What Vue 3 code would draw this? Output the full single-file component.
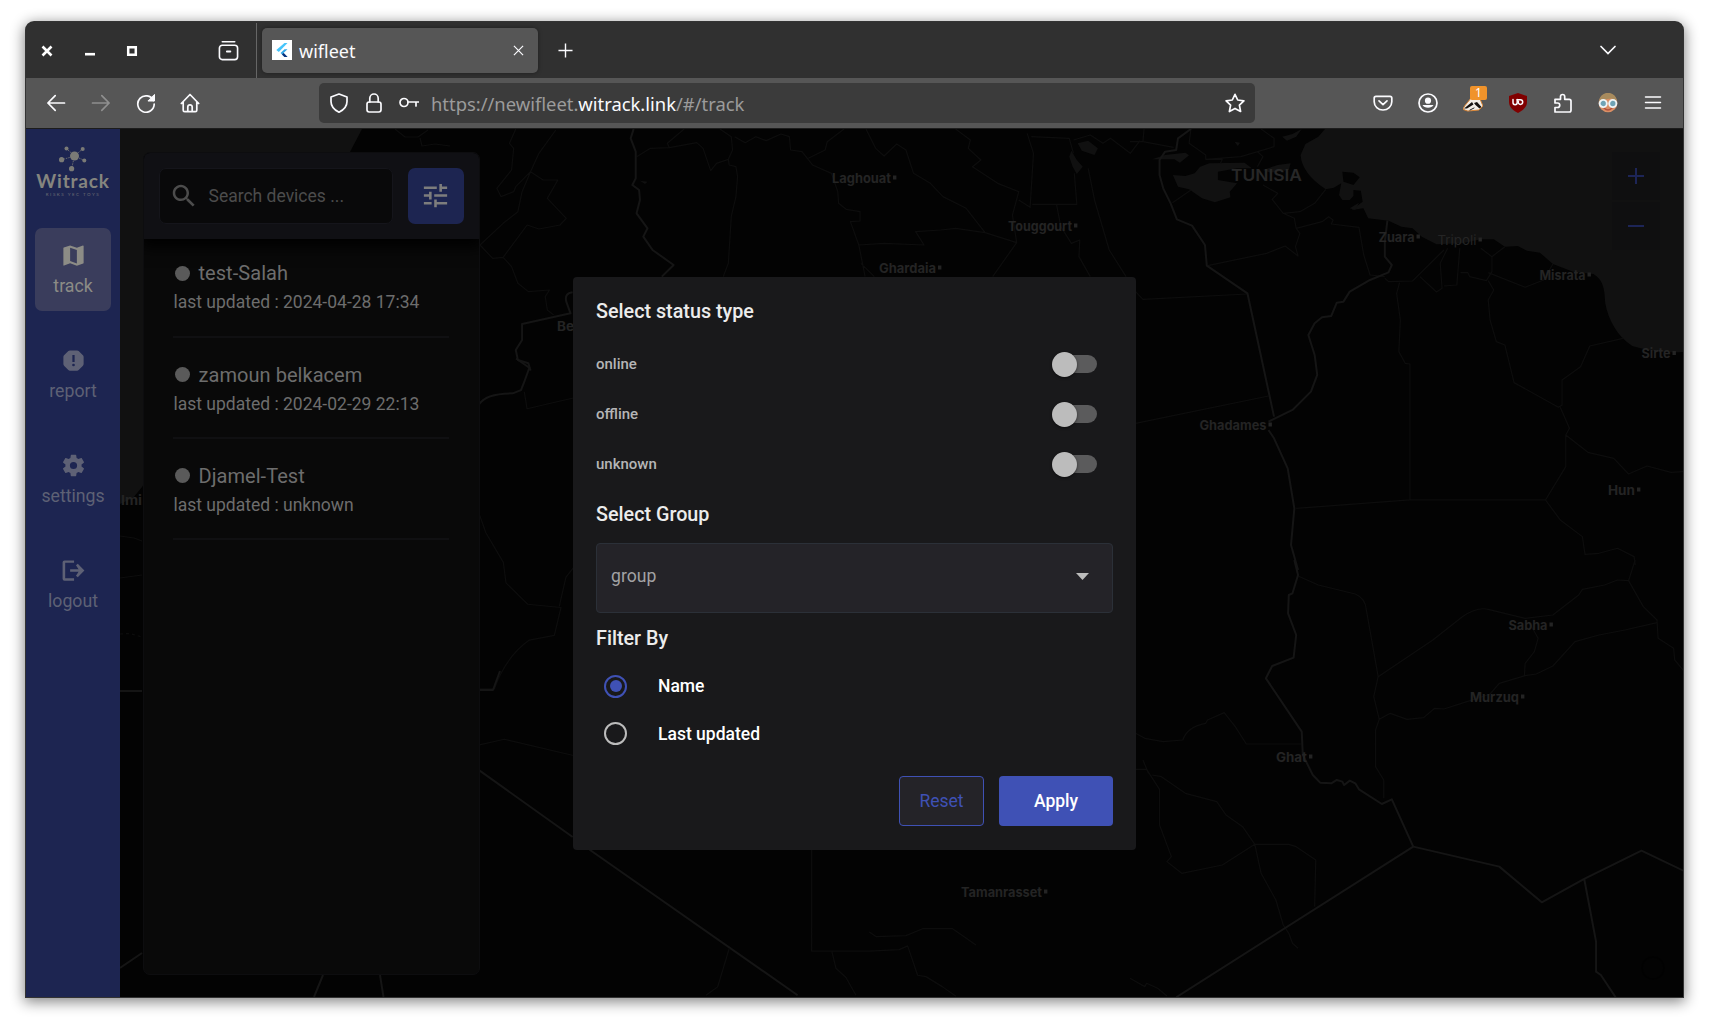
<script setup>
import { ref } from 'vue'

const navItems = [
  { id: 'track', label: 'track', icon: 'M20.5 3l-.16.03L15 5.1 9 3 3.36 4.9c-.21.07-.36.25-.36.48V20.5c0 .28.22.5.5.5l.16-.03L9 18.9l6 2.1 5.64-1.9c.21-.07.36-.25.36-.48V3.5c0-.28-.22-.5-.5-.5zM15 19l-6-2.11V5l6 2.11V19z' },
  { id: 'report', label: 'report', icon: 'M15.2 3H8.8Q8 3 7.4 3.6L3.6 7.4Q3 8 3 8.8v6.4q0 .8.6 1.4l3.8 3.8q.6.6 1.4.6h6.4q.8 0 1.4-.6l3.8-3.8q.6-.6.6-1.4V8.8q0-.8-.6-1.4l-3.8-3.8Q16 3 15.2 3zM11 7h2v6.4h-2zM12 17.2a1.2 1.2 0 1 1 0-2.4 1.2 1.2 0 0 1 0 2.4z' },
  { id: 'settings', label: 'settings', icon: 'M19.14 12.94c.04-.3.06-.61.06-.94 0-.32-.02-.64-.07-.94l2.03-1.58c.18-.14.23-.41.12-.61l-1.92-3.32c-.12-.22-.37-.29-.59-.22l-2.39.96c-.5-.38-1.03-.7-1.62-.94l-.36-2.54c-.04-.24-.24-.41-.48-.41h-3.84c-.24 0-.43.17-.47.41l-.36 2.54c-.59.24-1.13.57-1.62.94l-2.39-.96c-.22-.08-.47 0-.59.22L2.74 8.87c-.12.21-.08.47.12.61l2.03 1.58c-.05.3-.09.63-.09.94s.02.64.07.94l-2.03 1.58c-.18.14-.23.41-.12.61l1.92 3.32c.12.22.37.29.59.22l2.39-.96c.5.38 1.03.7 1.62.94l.36 2.54c.05.24.24.41.48.41h3.84c.24 0 .44-.17.47-.41l.36-2.54c.59-.24 1.13-.56 1.62-.94l2.39.96c.22.08.47 0 .59-.22l1.92-3.32c.12-.22.07-.47-.12-.61l-2.01-1.58zM12 15.2a3.2 3.2 0 1 1 0-6.4 3.2 3.2 0 0 1 0 6.4z' },
  { id: 'logout', label: 'logout', icon: 'M12.5 5.2H4.6v13.6h7.9V21H4Q2.3 21 2.3 19.300V4.700Q2.3 3 4 3h8.500zM9 10.900h7.500l-2.300-3.600 1.600-1.300L21.700 12l-5.900 6-1.600-1.300 2.300-3.600H9z' },
]
const active = ref('track')

const devices = [
  { name: 'test-Salah', updated: '2024-04-28 17:34' },
  { name: 'zamoun belkacem', updated: '2024-02-29 22:13' },
  { name: 'Djamel-Test', updated: 'unknown' },
]

const statuses = ['online', 'offline', 'unknown']
const sortOptions = ['Name', 'Last updated']
const sortBy = ref('Name')

const cities = [
  { name: 'Laghouat', x: 832, y: 182.5, w: 59 },
  { name: 'Touggourt', x: 1008, y: 230.5, w: 64 },
  { name: 'Ghardaia', x: 879, y: 272.5, w: 57 },
  { name: 'Be', x: 557, y: 330.5, w: 17 },
  { name: 'Zuara', x: 1378.5, y: 241.5, w: 36 },
  { name: 'Tripoli', x: 1437.5, y: 244.5, w: 39, light: true },
  { name: 'Misrata', x: 1539.5, y: 279.5, w: 46 },
  { name: 'Sirte', x: 1641.5, y: 358, w: 29 },
  { name: 'Ghadames', x: 1199.5, y: 429.5, w: 67 },
  { name: 'Hun', x: 1608, y: 494.5, w: 27 },
  { name: 'Sabha', x: 1508.5, y: 629.5, w: 39 },
  { name: 'Murzuq', x: 1470, y: 701.5, w: 49 },
  { name: 'Ghat', x: 1276, y: 761.5, w: 31 },
  { name: 'Tamanrasset', x: 961, y: 896.5, w: 81 },
]
</script>

<template>
  <div class="desktop">
    <div class="window">
      <header class="tabbar">
        <div class="controls">
          <svg viewBox="0 0 12 12" class="wc"><path d="M1.500 1.500l9 9M10.500 1.500l-9 9" stroke="#fff" stroke-width="2.600" /></svg>
          <svg viewBox="0 0 12 12" class="wc"><path d="M1 9.200h10" stroke="#fff" stroke-width="2.600" /></svg>
          <svg viewBox="0 0 12 12" class="wc"><path d="M2.200 2.200h7.600v7.600H2.200z" stroke="#fff" stroke-width="2.500" fill="none" /></svg>
        </div>
        <svg class="archive" viewBox="0 0 22 22" fill="none" stroke="#fbfbfe" stroke-width="1.700" stroke-linecap="round"><path d="M4.500 1.800h13" /><rect x="1.500" y="5.500" width="19" height="15" rx="3" /><path d="M9.300 12h3.600" stroke-width="2" /></svg>
        <div class="tab">
          <svg class="favicon" viewBox="0 0 20 20"><rect width="20" height="20" fill="#fff" /><path d="M12.500 3H15.500L6.800 12 4.300 9.900z" fill="#47c5fb" /><path d="M12.500 9.300h3L11.500 13l4 4h-3l-4-4z" fill="#35a8e6" /><path d="M10 14.500l1.700-1.500 3.800 4h-3z" fill="#0b2f7a" /></svg>
          <span class="tab-title">wifleet</span>
          <svg class="tab-close" viewBox="0 0 12 12"><path d="M1 1l10 10M11 1L1 11" stroke="#fbfbfe" stroke-width="1.300" /></svg>
        </div>
        <svg class="newtab" viewBox="0 0 16 16"><path d="M8 .5v15M.5 8h15" stroke="#fbfbfe" stroke-width="1.500" /></svg>
        <svg class="alltabs" viewBox="0 0 18 18"><path d="M2 5.500l7 7 7-7" fill="none" stroke="#fbfbfe" stroke-width="1.700" stroke-linecap="round" /></svg>
      </header>

      <div class="toolbar">
        <div class="nav-btns">
          <svg viewBox="0 0 20 20"><path d="M18.500 10H2M9.200 2.700L1.900 10l7.300 7.300" /></svg>
          <svg viewBox="0 0 20 20" class="dim"><path d="M1.500 10H18M10.800 2.700l7.300 7.300-7.300 7.300" /></svg>
          <svg viewBox="0 0 20 20"><path d="M17.400 7.500A8.200 8.200 0 1 0 18.200 11" /><path d="M18.500 1.800V8h-6.200z" fill="#fbfbfe" stroke-width="1" /></svg>
          <svg viewBox="0 0 20 20"><path d="M1.300 10.500L10 1.500l8.700 9M3.200 9v8.200q0 1.500 1.500 1.500h10.600q1.500 0 1.500-1.500V9M7.800 18.500V14a2.200 2.200 0 0 1 4.400 0v4.500" /></svg>
        </div>
        <div class="urlbar">
          <svg viewBox="0 0 20 20" class="shield"><path d="M10 1L18 4v4.500c0 4.500-3 8.300-8 10.700C5 16.800 2 13 2 8.500V4z" /></svg>
          <svg viewBox="0 0 20 20" class="lock"><rect x="3" y="9" width="14" height="10" rx="2.200" /><path d="M5.800 9V5.200a4.200 4.200 0 0 1 8.400 0V9" /></svg>
          <svg viewBox="0 0 20 20" class="key"><circle cx="5" cy="9.500" r="4" /><path d="M9 9h10.500M17 9v4" /></svg>
          <span class="url">https://newifleet.<b>witrack.link</b>/#/track</span>
          <svg viewBox="0 0 20 20" class="star"><path d="M10 1.300l2.700 5.700 6.200.8-4.500 4.300 1.200 6.400L10 15.400l-5.600 3.100 1.200-6.400L1.100 7.800l6.200-.8z" /></svg>
        </div>
        <div class="ext">
          <svg viewBox="0 0 20 20"><path d="M3 3.300h14q1.800 0 1.800 1.800v3.700a8.800 8.200 0 0 1-17.600 0V5.100Q1.200 3.300 3 3.300zM6 7.800l4 3.800 4-3.800" /></svg>
          <svg viewBox="0 0 20 20"><circle cx="10" cy="10" r="9" /><circle cx="10" cy="7.700" r="3.100" fill="#fbfbfe" stroke="none" /><path d="M4.500 12h11a6 4.500 0 0 1-11 0z" fill="#fbfbfe" stroke="none" /></svg>
          <span class="badger">
            <svg viewBox="0 0 20 20"><path d="M0 16C2 11 6 9 9 3l8 3 3 7-4 4-11 1z" fill="#f1ece6" stroke="#d98535" stroke-width="1" /><path d="M1 15.500L9 9l1.500 2.500-6.500 4zM11 10l3-1 4.500 5-2 1.500-4-3.500z" fill="#16120f" stroke="none" /><path d="M7 17l4-2" stroke="#222" stroke-width="1" /></svg>
            <i class="count">1</i>
          </span>
          <svg viewBox="0 0 20 20"><path d="M10 0l9 3v6c0 5-4 8.500-9 11-5-2.500-9-6-9-11V3z" fill="#800000" stroke="none" /><path d="M5 6.600v3a1.700 1.700 0 0 0 4.200 0V6.600" stroke-width="1.500" /><path d="M9.200 6.800h3.200a2.200 2.200 0 0 1 0 4.600 2.200 2.200 0 0 1-2-3" stroke-width="1.500" /></svg>
          <svg viewBox="0 0 20 20"><path d="M2 19V14.500h2.500a2.200 2.200 0 0 0 0-4.500H2V6.300h5.500V3.600a2.100 2.100 0 0 1 4.200 0v2.700h4.600q1.700 0 1.700 1.700v9.300q0 1.700-1.700 1.700z" /></svg>
          <svg viewBox="0 0 20 20"><circle cx="10" cy="10" r="9.300" fill="#d98f65" stroke="none" /><path d="M.8 9a9.200 9.200 0 0 1 18.400 0L14 5.500 9 6z" fill="#a88b5d" stroke="none" /><path d="M6 15q4 4 8 0" stroke="#b5513d" stroke-width="1.400" /><circle cx="5.200" cy="10.500" r="3.600" fill="#6fa3b5" stroke="#eef4f6" stroke-width="1.900" /><circle cx="14.800" cy="10.500" r="3.600" fill="#6fa3b5" stroke="#eef4f6" stroke-width="1.900" /></svg>
          <svg viewBox="0 0 20 20"><path d="M2.500 4h15M2.500 9.500h15M2.500 15h15" stroke-width="1.500" /></svg>
        </div>
      </div>

      <main class="page">
        <aside class="sidebar">
          <div class="brand">
            <svg class="brand-mark" viewBox="0 0 28 26" fill="#7a7a76" stroke="#7a7a76" stroke-width=".8"><path d="M15.500 10L7.500 2.500M15.500 10L23.500 3M15.500 10L25.500 14.500M15.500 10L2 14M15.500 10L12.500 23" stroke-dasharray="1.500 1" /><g stroke="none"><circle cx="15.500" cy="10" r="4.500" /><circle cx="7.500" cy="2.500" r="2" /><circle cx="23.700" cy="3" r="2" /><circle cx="25.300" cy="14.400" r="2" /><circle cx="2.600" cy="13.700" r="2.600" /><circle cx="12.600" cy="22.700" r="2.600" /></g></svg>
            <span class="brand-name">Witrack</span>
            <span class="brand-tag">RISKS YEC TOYS</span>
          </div>
          <nav class="menu">
            <a v-for="n in navItems" :key="n.id" class="menu-item" :class="{ on: n.id === active }" @click="active = n.id">
              <svg viewBox="0 0 24 24"><path :d="n.icon" fill-rule="evenodd" /></svg>
              <span>{{ n.label }}</span>
            </a>
          </nav>
        </aside>

        <section class="content">
          <svg class="map" viewBox="120 129 1563 868" fill="none">
            <rect x="120" y="129" width="1563" height="868" fill="#030303" />
            <path d="M120 129H362L350 152 142 487 133 498 120 504z" fill="#111" />
            <!-- north-east coast -->
            <g transform="translate(1130 120) scale(.3693 .3333)">
              <path fill="#111" d="M528 27L510 50 475 72 462 105Q465 160 530 208L552 203 572 190 566 225 575 240 595 240 605 228 605 210 625 212 630 245 600 270 632 265 645 295 700 302 735 320 765 325 790 350 830 373 900 370 950 358 985 358 1015 380 1050 378 1075 392 1110 398 1145 432 1200 455 1255 462C1280 480 1285 500 1287 550 1295 600 1320 650 1360 678 1400 690 1440 700 1500 696V27z" />
              <path fill="#030303" d="M575 155L605 158 622 172 605 195 578 185z" />
              <path fill="#111" d="M116 165L150 168 175 160 190 140 215 130 310 128 330 145 290 145 238 155 238 180 290 190 270 215 272 232 230 247 195 235 160 208 130 200zM60 118L95 105 150 98 160 106 135 128 120 118zM412 50L440 42 465 27 450 50 425 62zM283 65L298 68 292 78zM360 150L400 135 435 130 430 150 380 158zM595 265L620 248 610 270z" />
              <g class="thin">
                <path d="M0 65L35 65 38 27M35 65L118 82M165 27L160 70 205 105 205 118 300 110 390 80 390 55 355 27M345 95L360 110 345 140M115 248L165 210M205 118L250 118 245 130M360 195L400 220 385 238 415 280 460 275 500 250 530 208M415 280L445 295 450 325 520 305 538 290 550 300 545 312 620 322 633 405 650 465 690 470M450 325L460 340 448 380 455 408 420 378 370 400 210 437M690 475L700 485 765 483 850 390M785 470L830 516 845 505 840 430 860 385M850 498L885 495 893 385M895 458L915 458 920 470 965 482 980 455 980 410 950 385M980 410L1015 380M970 458L1070 502 1120 480 1145 432M970 482L985 510 970 540 975 600 992 665 1015 675 1040 788 1160 862 1170 855 1170 780 1220 740 1245 678 1335 655M730 488L722 520 732 600 728 695 745 730 758 732V1140H1125L1180 1040V945L1190 925 1165 862M758 1140L450 1165M1180 945L1240 997 1310 1015 1350 1062 1400 1038 1465 1057 1500 1055M1125 1140L1165 1200 1225 1250 1232 1303 1270 1300 1320 1285 1365 1310 1368 1335M15 515L35 538 318 522M15 910L375 828" />
              </g>
              <g class="border">
                <path d="M165 27L130 55 125 90 95 95 80 120 80 165 90 205 110 250 127 298 168 317 203 375 208 437 318 520 390 890M697 302L690 365 690 410 709 435 700 457 650 480 595 515 578 545 560 548 545 588 520 592 500 610 483 645 500 705 507 765 490 815 440 870 375 905M375 930L390 955 427 1045 445 1165 436 1275 455 1350" />
              </g>
            </g>
            <!-- south-east -->
            <g transform="translate(1130 560) scale(.3693 .3333)">
              <g class="thin">
                <path d="M455 48L510 75 610 102Q638 115 640 150L672 350 820 240 900 170Q940 140 970 148L1070 175 1145 165 1215 105 1225 88 1285 75 1320 60 1350 62 1368 0M1350 62L1390 140 1427 180 1430 235 1472 265 1475 300 1500 333M1427 188L1340 210 1270 225 1205 245 1145 318 1100 342 1070 347 1000 370 975 402 940 415 850 447 825 445 795 473 750 478 705 460 675 478 660 410 672 350M1085 195L1105 235 1095 275 1070 310 1068 347M675 478L665 510V620L687 660V715M15 520L40 535 90 545 143 540Q155 500 205 490L210 480 255 458 285 500 315 552H465M15 628H45L80 688 80 795 112 890 100 905 140 940 250 915 338 853 305 800 260 765 235 725 150 700 85 650 60 645M35 600L50 640M338 853H430L450 860 503 900 500 1040M338 853L355 940 395 1020 415 1095 430 1120 440 1150 455 1165M0 1255L40 1280 45 1270 75 1285 100 1308" />
              </g>
              <g class="border">
                <path d="M445 0L455 45 440 100 430 105 428 160 450 225 443 293 385 318 368 355 465 515 468 585 495 645 515 668 545 670 560 660 575 665 580 675 595 662 610 670 620 688 682 732 709 718 767 860 1000 920 1115 1027 1230 957 1385 872 1500 933M1230 957L1262 1145V1235L1275 1245 1315 1312M767 860L125 1312" />
              </g>
            </g>
            <!-- north -->
            <g transform="translate(480 120) scale(.4209 .3333)">
              <path fill="#101010" d="M1420 70L1445 62 1468 85 1460 105 1430 92zM1405 92L1418 120 1432 140 1418 162 1408 140 1400 110zM380 182L398 185 392 192z" />
              <g class="thin">
                <path d="M85 27L70 70 80 85 75 150 40 205 50 230 80 215 85 200 120 155 140 100 180 30M120 155L150 180H185L160 235 205 295 190 315 140 327 112 315 55 412 30 415 0 375 55 310 90 275 100 215 120 155M55 412L75 440 90 490 115 515 165 510 155 530 160 570 175 585M372 110L405 85 450 83 445 70 485 27M450 83L515 68 530 85 548 152 562 130 590 118 600 90 597 50 570 27M590 118L592 135 608 140 612 170 608 230 597 290 590 430 578 470M605 50L630 68 655 50 680 62 715 42 735 50 738 90 765 95 790 135 835 160 850 215 852 250 870 268 903 275V303L880 305 900 375 915 470M865 27L825 65 820 90 780 115M917 27L940 85 960 108 990 72 1012 90 1030 160 1070 190 1100 230 1155 265 1200 338 1130 325 1095 330 1035 335 1055 375 960 370 900 375M905 430L937 470M1200 338L1275 368 1218 470M1275 368L1265 285 1280 215 1230 190 1170 140 1190 120 1160 85 1165 60 1130 27M1280 240L1307 262 1315 100 1300 40M1310 50L1400 55 1410 100M1312 253H1418L1412 160M1370 255L1380 320 1405 370 1425 360 1423 410 1450 470M1445 145L1460 240 1495 390 1535 470M1410 60L1450 45 1480 70 1498 55 1545 100 1568 62" />
              </g>
              <g class="border">
                <path d="M365 27L358 55 370 95 370 175 362 195 378 210 380 240 372 280 398 325 388 350 410 390 460 435 432 470M220 517Q200 520 205 545L215 580 100 612V660L85 690 90 720 115 730 120 752" />
              </g>
            </g>
            <!-- south-west -->
            <g transform="translate(476 270) scale(.3333 .4655)">
              <g class="border">
                <path d="M120 190L160 210 145 240 135 258 110 265Q30 265 10 288M10 1075L290 1218M340 1245L965 1558" />
              </g>
              <g class="thin">
                <path d="M145 262L153 298 292 275M10 525L30 565 82 628 90 672 155 718 255 725 235 785 160 795Q90 830 55 900H10M250 722L270 660 292 640M10 1020L85 1008 292 1043M1007 1245V1463H1180L1270 1460 1295 1452 1325 1515 1350 1518 1400 1540 1440 1560M1180 1422L1200 1432 1290 1430 1340 1415 1430 1415 1500 1450M1068 1465L1080 1500 1110 1520 1140 1558" />
                <path d="M760 1457L725 1540 690 1558" stroke="#121212" />
              </g>
            </g>
            <g class="thin">
              <path d="M395 129L405 137 418 137 428 130M420 138L422 146 435 144 450 146M120 536L134 538 142 541M120 578L142 575" />
              <path d="M120 634L130 633.500 142 637" stroke-dasharray="3 3" />
            </g>
            <g class="border">
              <path d="M120 691H142M480 690H493L500 671M120 968L142 953M323 975L314 997M380 975L383.500 997" />
            </g>
            <g class="labels">
              <g v-for="c in cities" :key="c.name" :class="{ light: c.light }">
                <text :x="c.x" :y="c.y" :textLength="c.w" lengthAdjust="spacingAndGlyphs">{{ c.name }}</text>
                <rect v-if="c.name !== 'Be'" :x="c.x + c.w + 2" :y="c.y - 7" width="3.400" height="4" />
              </g>
              <text x="121" y="505" textLength="21" lengthAdjust="spacingAndGlyphs">lmi</text>
              <text class="country" x="1231" y="181" textLength="71" lengthAdjust="spacingAndGlyphs">TUNISIA</text>
            </g>
            <g opacity=".5"><circle cx="1653" cy="968" r="11" stroke="#000" stroke-width="1.500" /></g>
          </svg>

          <div class="zoom">
            <button><svg viewBox="0 0 16 16"><path d="M8 0v16M0 8h16" /></svg></button>
            <button><svg viewBox="0 0 16 16"><path d="M0 8h16" /></svg></button>
          </div>

          <div class="panel">
            <div class="panel-head">
              <div class="search">
                <svg viewBox="0 0 24 24"><path d="M15.500 14h-.79l-.28-.27C15.410 12.590 16 11.110 16 9.500 16 5.910 13.090 3 9.500 3S3 5.910 3 9.500 5.910 16 9.500 16c1.610 0 3.090-.59 4.230-1.570l.27.28v.79l5 4.990L20.490 19l-4.990-5zm-6 0C7.010 14 5 11.990 5 9.500S7.010 5 9.500 5 14 7.010 14 9.500 11.990 14 9.500 14z" /></svg>
                <span>Search devices ...</span>
              </div>
              <button class="tune">
                <svg viewBox="0 0 24 24"><path d="M3 17v2h6v-2H3zM3 5v2h10V5H3zm10 16v-2h8v-2h-8v-2h-2v6h2zM7 9v2H3v2h4v2h2V9H7zm14 4v-2H11v2h10zm-6-4h2V7h4V5h-4V3h-2v6z" /></svg>
              </button>
            </div>
            <ul class="devices">
              <li v-for="d in devices" :key="d.name">
                <div class="device-name"><i></i>{{ d.name }}</div>
                <div class="device-date">last updated : {{ d.updated }}</div>
              </li>
            </ul>
          </div>
        </section>

        <div class="dialog">
          <h2 class="h-status">Select status type</h2>
          <div v-for="s in statuses" :key="s" class="status">
            <span>{{ s }}</span>
            <i class="switch"></i>
          </div>
          <h2 class="h-group">Select Group</h2>
          <div class="select">
            <span>group</span>
            <svg viewBox="0 0 13 7"><path d="M0 0h13L6.500 7z" /></svg>
          </div>
          <h2 class="h-filter">Filter By</h2>
          <label v-for="o in sortOptions" :key="o" class="radio" :class="{ on: o === sortBy }" @click="sortBy = o">
            <i></i><span>{{ o }}</span>
          </label>
          <div class="actions">
            <button class="reset">Reset</button>
            <button class="apply">Apply</button>
          </div>
        </div>
      </main>
    </div>
  </div>
</template>

<style>
body { background: #fff; }
</style>

<style scoped>
* { box-sizing: border-box; }
.desktop { width: 1709px; height: 1026px; padding: 22px 26px 29px; overflow: hidden; background: #fff; font-family: Roboto, sans-serif; }
.window { width: 1657px; height: 975px; display: flex; flex-direction: column; border-radius: 8px 8px 0 0; box-shadow: 0 0 0 1px #333, 0 3px 14px 2px rgba(0, 0, 0, .48); background: #303030; }
svg { display: block; flex: none; }
button { font: inherit; padding: 0; border: 0; background: none; }

.tabbar { height: 56px; flex: none; display: flex; align-items: center; background: #303030; border-radius: 8px 8px 0 0; }
.controls { display: flex; gap: 30.500px; margin: 2px 0 0 15px; }
.wc { width: 12px; height: 12px; }
.archive { width: 21px; height: 21px; margin: 1px 23px 0 80px; }
.tab { height: 45px; width: 276px; display: flex; align-items: center; padding: 0 14px 0 10px; background: #565656; border-radius: 5px; box-shadow: 0 0 4px rgba(0, 0, 0, .4); position: relative; }
.tab::before { content: ''; position: absolute; left: -6px; top: -5px; width: 1px; height: 55px; background: #666; }
.favicon { width: 20px; height: 20px; }
.tab-title { flex: 1; margin: 2px 0 0 7px; font: 18px "Noto Sans", sans-serif; color: #fbfbfe; }
.tab-close { width: 11px; height: 11px; }
.newtab { width: 15px; height: 15px; margin: 1px 0 0 20px; }
.alltabs { width: 18px; height: 18px; margin-left: auto; margin-right: 66px; }

.toolbar { height: 51px; flex: none; display: flex; align-items: center; background: #565656; border-bottom: 1px solid #1c1c1c; }
.toolbar svg { fill: none; stroke: #fbfbfe; stroke-width: 1.700; width: 20px; height: 20px; stroke-linejoin: round; stroke-linecap: round; }
.toolbar svg.dim { stroke: #8f8f8f; }
.nav-btns { display: flex; gap: 24.800px; margin-left: 20px; width: 273px; flex: none; }
.urlbar { width: 936px; height: 40px; display: flex; align-items: center; background: #3b3b3b; border-radius: 5px; }
.urlbar .shield { margin-left: 10px; }
.urlbar .lock { margin-left: 15px; }
.urlbar .key { margin-left: 15px; }
.url { flex: 1; margin-left: 12px; font: 18.400px "Noto Sans", sans-serif; color: #9b9b9b; white-space: nowrap; }
.url b { font-weight: 400; color: #fbfbfe; }
.urlbar .star { margin-right: 10px; }
.ext { margin-left: 118px; display: flex; gap: 25px; }
.badger { position: relative; }
.count { position: absolute; left: 7px; top: -7px; width: 17px; height: 14px; border-radius: 2px; background: #f0932b; color: #fff; font: 12px/14px "Noto Sans", sans-serif; text-align: center; }

.page { flex: 1; display: flex; position: relative; overflow: hidden; }
.sidebar { width: 94px; flex: none; background: #1d2551; display: flex; flex-direction: column; align-items: center; }
.brand { height: 99px; padding-top: 17px; display: flex; flex-direction: column; align-items: center; flex: none; color: #85857f; }
.brand-mark { width: 28px; height: 26px; }
.brand-name { font: 700 19px/18px Lato, sans-serif; letter-spacing: .8px; margin-top: 0; }
.brand-tag { font: 4.500px/5px Lato, sans-serif; letter-spacing: 1.500px; margin-top: 2px; color: #6c6d75; }
.menu { display: flex; flex-direction: column; gap: 22px; }
.menu-item { width: 76px; height: 83px; border-radius: 7px; display: flex; flex-direction: column; align-items: center; color: #5e6175; font: 400 17.700px/22px Roboto, sans-serif; }
.menu-item.on { background: #3a3d5c; color: #8c8c86; }
.menu-item svg { width: 27px; height: 27px; fill: currentColor; margin: 14px 0 6px; }

.content { flex: 1; position: relative; }
.map { width: 1563px; height: 868px; }
.thin path { stroke: #0d0d0d; stroke-width: 1.200; vector-effect: non-scaling-stroke; stroke-linejoin: round; }
.border path { stroke: #151515; stroke-width: 2; vector-effect: non-scaling-stroke; stroke-linejoin: round; }
.labels { fill: #242424; font: 700 13px Inter, sans-serif; }
.labels .light { fill: #252525; font-weight: 400; }
.labels .country { font-size: 16px; font-weight: 600; fill: #272727; }
.zoom { position: absolute; right: 23.500px; top: 23px; width: 48px; display: flex; flex-direction: column; gap: 2px; }
.zoom button { height: 48px; background: #0f0f10; display: flex; align-items: center; justify-content: center; }
.zoom svg { width: 16px; height: 16px; stroke: #1d2557; stroke-width: 2; }

.panel { position: absolute; left: 22.500px; top: 23px; width: 337px; height: 823px; border: 1px solid #0d0d0f; border-radius: 7px; background: #090909; overflow: hidden; }
.panel-head { height: 86px; display: flex; align-items: flex-start; padding: 14.500px 15px 0 15px; background: #101014; box-shadow: 0 4px 14px 4px #000; }
.search { width: 234px; height: 56px; display: flex; align-items: center; padding-left: 9px; background: #09090a; border: 1px solid #15151b; border-radius: 7px; color: #4c4c4c; font: 400 17.500px Roboto, sans-serif; }
.search svg { width: 30px; height: 30px; fill: #4c4c4c; margin-right: 10px; }
.tune { width: 56px; height: 56px; margin-left: 15px; border-radius: 7px; background: #1d2551; display: flex; align-items: center; justify-content: center; }
.tune svg { width: 31px; height: 31px; fill: #7d7d7d; }
.devices { list-style: none; margin: 0; padding: 18px 30px 0 29px; }
.devices li { height: 101.300px; border-bottom: 2px solid #101012; margin: 0; padding: 2px 0 0 1px; white-space: nowrap; }
.devices li:first-child { height: 80.500px; padding-top: 2px; }
.devices li:not(:first-child) { padding-top: 23px; }
.device-name { display: flex; align-items: center; height: 28px; color: #6d6d6d; font-size: 20px; letter-spacing: .05px; }
.device-name i { width: 15px; height: 15px; border-radius: 50%; background: #5a5a5a; margin: 0 9px 0 1px; }
.device-date { color: #6d6d6d; font-size: 17.500px; line-height: 22px; margin-top: 4px; }

.dialog { position: absolute; left: 547px; top: 148px; width: 563px; height: 573px; padding: 20px 23px 0; border-radius: 4px; background: #19191b; display: flex; flex-direction: column; }
.dialog h2 { margin: 0; font: 500 19.750px/30px Roboto, sans-serif; color: #ececec; flex: none; }
.h-status { margin-bottom: 12px !important; }
.status { height: 50px; display: flex; align-items: center; justify-content: space-between; color: #b5b5b6; font-size: 15px; font-weight: 500; }
.switch { position: relative; width: 45px; height: 25px; margin-right: 16px; display: flex; align-items: center; justify-content: flex-end; }
.switch::before { content: ''; width: 36px; height: 18px; border-radius: 9px; background: #5b5b5c; }
.switch::after { content: ''; position: absolute; left: 0; top: 0; width: 25px; height: 25px; border-radius: 50%; background: #bcbcbc; box-shadow: 0 1px 3px rgba(0, 0, 0, .5); }
.h-group { margin: 11px 0 13px !important; }
.select { height: 70px; flex: none; border: 1px solid #2b3038; border-radius: 4px; background: #242328; display: flex; align-items: center; justify-content: space-between; padding: 0 23px 4px 14px; color: #a2a2a4; font-size: 17.600px; }
.select svg { width: 13px; height: 7px; fill: #bcbcbc; margin-top: 1px; }
.h-filter { margin: 11px 0 8.500px !important; }
.radio { height: 47.500px; display: flex; align-items: center; padding-left: 8px; color: #fff; font-size: 17.500px; font-weight: 500; }
.radio i { width: 23px; height: 23px; border: 2.400px solid #bcbcbc; border-radius: 50%; margin-right: 31px; display: flex; align-items: center; justify-content: center; }
.radio.on i { border-color: #3f51b5; }
.radio.on i::before { content: ''; width: 12px; height: 12px; border-radius: 50%; background: #3f51b5; }
.actions { display: flex; justify-content: flex-end; gap: 15px; margin-top: 18.500px; }
.actions button { height: 50px; border-radius: 4px; font-size: 17.500px; }
.reset { width: 85px; border: 1.500px solid #3f51b5 !important; background: #242328; color: #3f51b5; }
.apply { width: 114px; background: #3f51b5; color: #fff; font-weight: 500 !important; }
</style>
